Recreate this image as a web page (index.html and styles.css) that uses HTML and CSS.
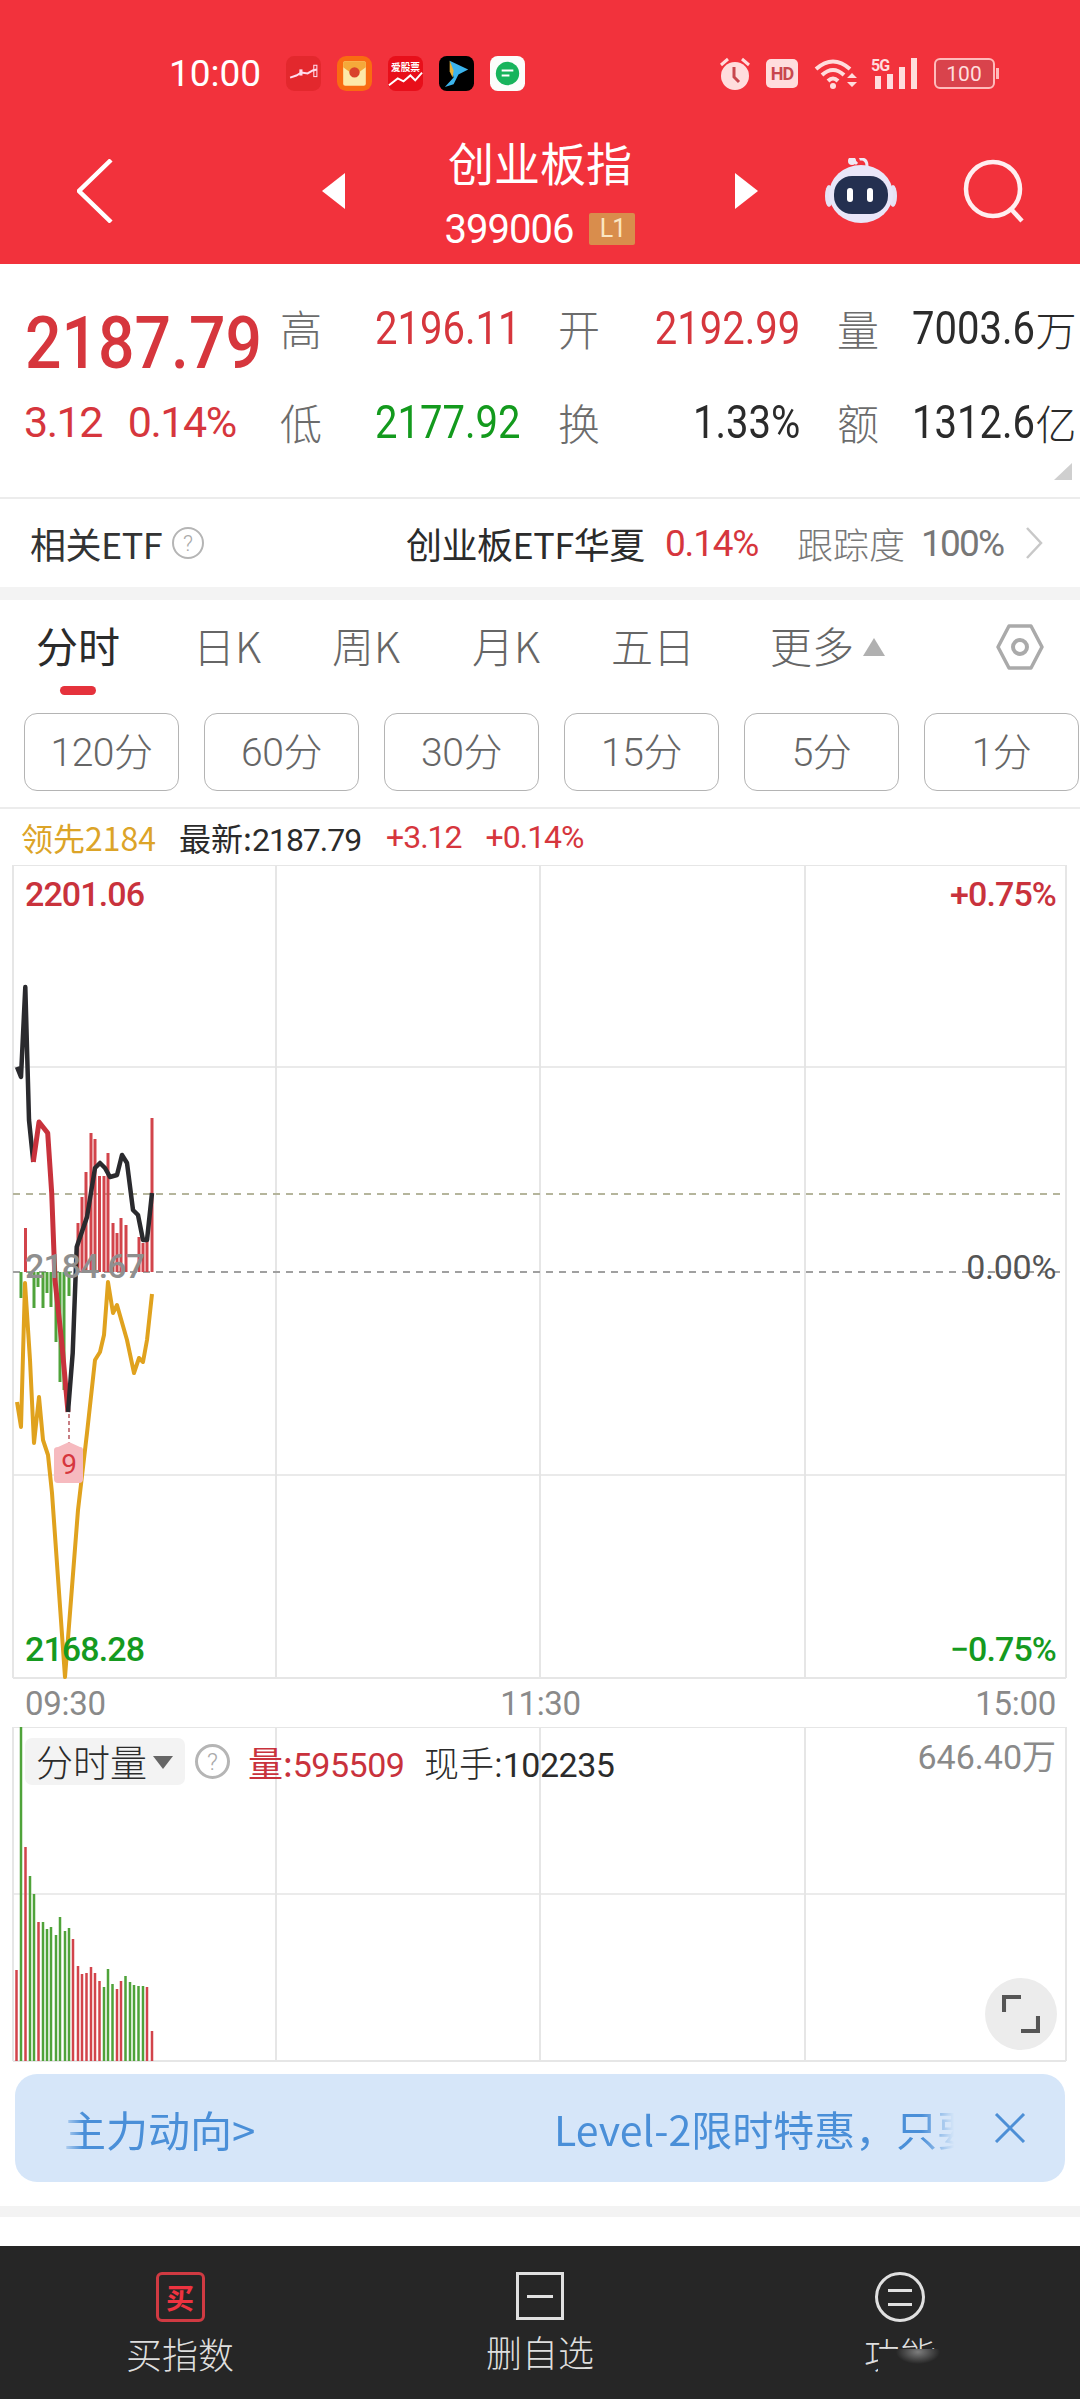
FILE: index.html
```html
<!DOCTYPE html>
<html lang="zh">
<head>
<meta charset="utf-8">
<title>创业板指</title>
<link rel="stylesheet" href="styles.css">
</head>
<body>
<div class="page">
<header class="head">
  <div class="status">
    <span class="clock">10:00</span>
    <div class="apps">
      <svg class="app" viewBox="0 0 34 34"><rect width="34" height="34" rx="8" fill="#e3282d"/><path d="M4 21l6-2 5-3 6 1 5-3 4-1" fill="none" stroke="#fde" stroke-width="2"/><rect x="13" y="13" width="3" height="6" fill="#fde"/><rect x="27" y="9" width="3" height="11" fill="none" stroke="#fde"/></svg>
      <svg class="app" viewBox="0 0 34 34"><rect width="34" height="34" rx="9" fill="#f96b12"/><rect x="6" y="5" width="22" height="24" rx="2" fill="#fde9a8"/><path d="M6 11l11 8 11-8V7q0-2-2-2H8q-2 0-2 2z" fill="#f5a93a"/><circle cx="17" cy="16" r="5" fill="#d9432b"/></svg>
      <svg class="app" viewBox="0 0 36 36"><rect width="36" height="36" rx="8" fill="#e80f1a"/><text class="app-text" x="18" y="15">爱股票</text><path d="M1 30l9-7 6 3 7-6 5 5 7-8" fill="none" stroke="#fff" stroke-width="2"/></svg>
      <svg class="app" viewBox="0 0 36 36"><rect width="36" height="36" rx="8" fill="#000"/><path d="M11 5l19 9-10 5-5 10-9 3 9-10z" fill="#3cb4ec"/><path d="M11 5l4 10-1 7-3-6z" fill="#e8b43a"/></svg>
      <svg class="app" viewBox="0 0 36 36"><rect width="36" height="36" rx="8" fill="#fbfdfb"/><circle cx="18" cy="18" r="12" fill="#17b45c"/><path d="M12 15h12M12 20h8" stroke="#fff" stroke-width="2"/></svg>
    </div>
    <div class="sys">
      <svg class="sys-alarm" viewBox="0 0 32 34"><path d="M2 9l7-6M30 9l-7-6" stroke="#fdd" stroke-width="3"/><circle cx="16" cy="20" r="14" fill="#fdd"/><path d="M15 11v10l5 5" fill="none" stroke="#c8474e" stroke-width="3"/></svg>
      <svg class="sys-hd" viewBox="0 0 32 29"><rect width="32" height="29" rx="5" fill="#fdd"/><text class="hd-text" x="16" y="21">HD</text></svg>
      <svg class="sys-wifi" viewBox="0 0 44 32"><path d="M2 12q17-15 34 0M8 18q11-10 22 0M14 24q5-5 10 0" fill="none" stroke="#fdd" stroke-width="4"/><circle cx="19" cy="29" r="3" fill="#fdd"/><path d="M33 21l5-5 5 5zM33 25l5 5 5-5z" fill="#fdd"/></svg>
      <svg class="sys-sig" viewBox="0 0 48 32"><text class="g-text" x="0" y="14">5G</text><rect x="4" y="19" width="6" height="13" fill="#fdd"/><rect x="16" y="17" width="6" height="15" fill="#fdd"/><rect x="28" y="10" width="6" height="22" fill="#fdd"/><rect x="40" y="1" width="6" height="31" fill="#fdd"/></svg>
      <svg class="sys-bat" viewBox="0 0 66 31"><rect x="1" y="1" width="59" height="29" rx="5" fill="#d9434c" stroke="#fbb" stroke-width="2"/><rect x="62" y="10" width="3" height="11" fill="#fbb"/><text class="bat-text" x="30" y="23">100</text></svg>
    </div>
  </div>
  <div class="titlebar">
    <svg class="back" viewBox="0 0 36 64"><path d="M34 1L2 32l32 31" fill="none" stroke="#fff" stroke-width="4.5"/></svg>
    <span class="tri-l"></span>
    <div class="title">
      <div class="title-name">创业板指</div>
      <div class="title-code"><span class="code">399006</span><span class="l1">L1</span></div>
    </div>
    <span class="tri-r"></span>
    <svg class="robot" viewBox="0 0 72 66"><path d="M32 6q-6-6-3-8 6-1 7 3 6 0 6 7" fill="none" stroke="#efe9f5" stroke-width="3"/><circle cx="27" cy="3" r="4" fill="#efe9f5"/><ellipse cx="4" cy="38" rx="4" ry="11" fill="#e6e2f4"/><ellipse cx="68" cy="38" rx="4" ry="11" fill="#e6e2f4"/><ellipse cx="36" cy="36" rx="32" ry="29" fill="#e9e6f8"/><rect x="9" y="18" width="54" height="38" rx="18" fill="#243050"/><rect x="22" y="30" width="6" height="14" rx="3" fill="#fff"/><rect x="42" y="30" width="6" height="14" rx="3" fill="#fff"/></svg>
    <svg class="search" viewBox="0 0 62 64"><circle cx="30" cy="30" r="27" fill="none" stroke="#ffeef0" stroke-width="4.5"/><path d="M48 50l11 12" stroke="#ffeef0" stroke-width="4.5"/></svg>
  </div>
</header>

<section class="quote">
  <div class="price">2187.79</div>
  <div class="sub"><span class="up s1">3.12</span><span class="up">0.14%</span></div>
  <span class="lb r1">高</span><span class="val up r1">2196.11</span>
  <span class="lb r1">开</span><span class="val up end r1">2192.99</span>
  <span class="lb r1">量</span><span class="valu dark r1"><span class="sx">7003.6</span><i class="unit">万</i></span>
  <span class="lb r2">低</span><span class="val down r2">2177.92</span>
  <span class="lb r2">换</span><span class="val dark end r2">1.33%</span>
  <span class="lb r2">额</span><span class="valu dark r2"><span class="sx">1312.6</span><i class="unit">亿</i></span>
  <span class="corner"></span>
</section>

<section class="etf">
  <span class="etf-t">相关ETF</span>
  <span class="q q-etf">?</span>
  <span class="etf-name">创业板ETF华夏</span>
  <span class="etf-pct">0.14%</span>
  <span class="etf-track">跟踪度</span>
  <span class="etf-num">100%</span>
  <svg class="etf-chev" viewBox="0 0 18 32"><path d="M2 1l14 15L2 31" fill="none" stroke="#c8c8c8" stroke-width="2.5"/></svg>
</section>
<div class="band"></div>

<nav class="tabs">
  <div class="tab on">分时<i class="bar"></i></div>
  <div class="tab t2">日K</div>
  <div class="tab t3">周K</div>
  <div class="tab t4">月K</div>
  <div class="tab t5">五日</div>
  <div class="tab t6">更多<i class="up-tri"></i></div>
  <svg class="hex" viewBox="0 0 48 46"><path d="M13 2h22l11 21-11 21H13L2 23z" fill="none" stroke="#aaa" stroke-width="3.5" stroke-linejoin="round"/><circle cx="24" cy="23" r="7" fill="none" stroke="#aaa" stroke-width="4"/></svg>
</nav>

<div class="periods">
  <span class="pd">120分</span><span class="pd">60分</span><span class="pd">30分</span><span class="pd">15分</span><span class="pd">5分</span><span class="pd">1分</span>
</div>

<div class="infoline">
  <span class="gold">领先2184</span><span class="dark">最新:<b class="n2">2187.79</b></span><span class="up n2">+3.12</span><span class="up n2">+0.14%</span>
</div>

<section class="chart">
  <svg class="chart-svg" viewBox="0 865 1080 815">
    <g class="grid">
      <path d="M13 865V1678M276 865V1678M540 865V1678M805 865V1678M1066 865V1678M13 865H1066M13 1678H1066"/>
    </g>
    <path class="grid-h" d="M13 1067H1066M13 1475H1066"/>
    <path class="dash-o" d="M13 1194H1066"/>
    <path class="dash-g" d="M13 1272H1066"/>
    <path class="bar-r" d="M25.5 1272V1228M78 1272V1223M82 1272V1197M86 1272V1172M91 1272V1133M95 1272V1139M99.500 1272V1176M104 1272V1176M108 1272V1153M113 1272V1223M117 1272V1233M121 1272V1218M126 1272V1225M139 1272V1237M143 1272V1243M147 1272V1237M152 1272V1118"/>
    <path class="bar-g" d="M21 1272V1298M30 1272V1278M34 1272V1308M38 1272V1287M43 1272V1308M47 1272V1293M51 1272V1307M56 1272V1342M60 1272V1382M64 1272V1390M69 1272V1296"/>
    <polyline class="ln-y" points="17,1402 21,1427 25,1283 30,1360 34,1443 39,1397 43,1440 48,1455 52,1493 65,1677 72,1587 78,1510 87,1433 95,1360 100,1352 104,1335 108,1282 113,1313 117,1305 127,1340 134,1373 139,1358 143,1362 147,1340 152,1294"/>
    <polyline class="ln-k" points="17,1067 21,1077 25.300,987 29,1120 33.300,1162"/>
    <polyline class="ln-r" points="33.300,1162 39,1122 47.700,1133 51.700,1193 55,1280 62,1345 68,1412"/>
    <polyline class="ln-k" points="68,1412 72.700,1353 76.700,1247 87,1217 95,1168 100,1163 105,1168 110,1177 117,1175 122,1155 127,1163 133,1210 138,1215 143,1240 147,1240 152,1193"/>
    <path class="sig-line" d="M69 1414V1443"/>
    <path class="sig" d="M54 1450q0-3 4-3l11-5 11 5q3 0 3 3v29q0 4-4 4H58q-4 0-4-4z"/>
    <text class="sig-t" x="69" y="1474">9</text>
  </svg>
  <span class="cl c-hi up2">2201.06</span>
  <span class="cl c-hip up2">+0.75%</span>
  <span class="cl c-pre">2184.67</span>
  <span class="cl c-zero">0.00%</span>
  <span class="cl c-lo down2">2168.28</span>
  <span class="cl c-lop down2">−0.75%</span>
</section>

<div class="times"><span>09:30</span><span>11:30</span><span>15:00</span></div>

<section class="vol">
  <svg class="vol-svg" viewBox="0 1728 1080 336">
    <path class="grid" d="M13 1728V2062M276 1728V2062M540 1728V2062M805 1728V2062M1066 1728V2062M13 1728H1066M13 2062H1066"/>
    <path class="grid-h" d="M13 1895H1066"/>
    <path class="v-r" d="M16.500 2062V1971M25.500 2062V1848M38.500 2062V1923M73 2062V1940M78 2062V1967M82 2062V1975M86.500 2062V1974M91 2062V1968M95 2062V1974M99.500 2062V1982M117 2062V1990M121 2062V1982M147 2062V1988M152 2062V2032"/>
    <path class="v-g" d="M21 2062V1728M30 2062V1877M34 2062V1895M43 2062V1923M47 2062V1930M51 2062V1928M56 2062V1936M60 2062V1918M65 2062V1932M69 2062V1929M104 2062V1988M108 2062V1970M112.500 2062V1985M125.500 2062V1977M130 2062V1983M134 2062V1986M138.500 2062V1987M143 2062V1987"/>
  </svg>
  <div class="vol-head">
    <span class="chip">分时量<i class="chip-tri"></i></span>
    <span class="q q-vol">?</span>
    <span class="vol-l up2">量:<b class="vn">595509</b></span>
    <span class="vol-c">现手:<b class="vn">102235</b></span>
  </div>
  <span class="vol-max">646.40万</span>
  <button class="expand"><svg viewBox="0 0 40 40" class="expand-i"><path d="M2 18V2h18M38 22v16H20" fill="none" stroke="#555" stroke-width="4.5"/></svg></button>
</section>

<div class="banner-wrap">
  <div class="banner">
    <div class="bn-l"><span>主力动向&gt;</span></div>
    <div class="bn-r"><span>Level-2限时特惠，只要</span></div>
    <svg class="bn-x" viewBox="0 0 32 30"><path d="M2 1l28 28M30 1L2 29" stroke="#4d8fd6" stroke-width="3" fill="none"/></svg>
  </div>
</div>
<div class="band2"></div>
<div class="gap"></div>

<footer class="bottom">
  <div class="bt">
    <span class="buy"><b>买</b></span>
    <span class="bt-t">买指数</span>
  </div>
  <div class="bt">
    <span class="del"><i></i></span>
    <span class="bt-t">删自选</span>
  </div>
  <div class="bt">
    <span class="fn"><i></i><i></i></span>
    <span class="bt-t">功能</span>
  </div>
  <div class="smudge"></div>
</footer>
</div>
</body>
</html>
```
FILE: styles.css
```css
* { box-sizing: border-box; }
html, body { margin: 0; padding: 0; background: #fff; }
body { font-family: "Noto Sans CJK SC", Roboto, sans-serif; color: #2b2b2b; }
i { font-style: normal; }
b { font-weight: inherit; }
.page { width: 1080px; height: 2400px; overflow: hidden; position: relative; }

.n2 { font-family: Roboto, "Noto Sans CJK SC", sans-serif; letter-spacing: -1px; }
.up { color: #d6363d; }
.down { color: #139a1d; }
.dark { color: #2b2b2b; }
.up2 { color: #c9323c; }
.down2 { color: #159a1f; }
.gold { color: #dca428; }

/* header */
.head { height: 264px; background: #f2323c; color: #fff; }
.status { height: 146px; display: flex; align-items: center; padding-left: 169px; }
.clock { font: 37px/1 Roboto, sans-serif; color: #fff; width: 117px; }
.apps { display: flex; gap: 16px; align-items: center; }
.app { width: 35px; height: 35px; display: block; }
.app-text { font: 700 10px "Noto Sans CJK SC", sans-serif; fill: #fff; text-anchor: middle; }
.sys { display: flex; align-items: center; margin-left: 194px; }
.sys svg { display: block; }
.sys-alarm { width: 32px; height: 34px; }
.sys-hd { width: 32px; height: 29px; margin-left: 15px; }
.sys-wifi { width: 44px; height: 32px; margin-left: 16px; }
.sys-sig { width: 48px; height: 32px; margin-left: 13px; }
.sys-bat { width: 66px; height: 31px; margin-left: 15px; }
.hd-text { font: 700 18px Roboto, sans-serif; fill: #c8474e; text-anchor: middle; letter-spacing: -1px; }
.g-text { font: 700 16px Roboto, sans-serif; fill: #fdd; letter-spacing: -1px; }
.bat-text { font: 400 21px Roboto, sans-serif; fill: #fdd; text-anchor: middle; }

.titlebar { height: 118px; padding: 0 0 28px 77px; display: flex; align-items: center; }
.back { width: 36px; height: 64px; display: block; }
.tri-l { margin-left: 209px; width: 0; height: 0; border-style: solid; border-width: 18px 23px 18px 0; border-color: transparent #fff transparent transparent; }
.tri-r { width: 0; height: 0; border-style: solid; border-width: 18px 0 18px 23px; border-color: transparent transparent transparent #fff; }
.title { width: 390px; text-align: center; margin-top: 14px; }
.title-name { font-size: 46px; line-height: 56px; margin-top: -12px; }
.title-code { display: flex; justify-content: center; align-items: center; height: 44px; margin-top: 18px; }
.code { font: 40px Roboto, sans-serif; letter-spacing: -1px; }
.l1 { width: 46px; height: 32px; margin-left: 16px; background: #d98d4c; color: #fbe6c4; font: 25px/32px Roboto, sans-serif; border-radius: 2px; letter-spacing: -1px; }
.robot { width: 72px; height: 66px; margin-left: 67px; display: block; }
.search { width: 62px; height: 64px; margin-left: 66px; display: block; }

/* quote */
.quote { height: 233px; padding: 17px 0 0 25px; display: grid; grid-template-columns: 256px 94px 184px 95px 184px 74px 168px; grid-template-rows: 94px 94px; position: relative; align-items: center; }
.price { grid-column: 1; grid-row: 1; align-self: end; justify-self: start; font: 500 73px/70px Roboto, sans-serif; color: #d6363d; transform: scaleX(.88); transform-origin: left center; margin-bottom: -3px; white-space: nowrap; }
.sub { grid-column: 1; grid-row: 2; font: 43px/60px Roboto, sans-serif; letter-spacing: -1.500px; white-space: nowrap; margin-left: -1px; }
.s1 { margin-right: 26px; }
.lb { font-size: 42px; line-height: 60px; color: #6c6c6c; font-weight: 300; margin-left: -1px; }
.val { font: 46px/60px Roboto, sans-serif; white-space: nowrap; justify-self: start; transform: scaleX(.87); transform-origin: left center; }
.val.end { justify-self: end; margin-right: 38px; transform-origin: right center; }
.valu { display: flex; align-items: center; white-space: nowrap; font: 46px/60px Roboto, sans-serif; }
.sx { display: inline-block; transform: scaleX(.87); transform-origin: left center; margin-right: -18px; }
.r1 { grid-row: 1; }
.r2 { grid-row: 2; }
.unit { font: 300 41px/60px "Noto Sans CJK SC", sans-serif; }
.corner { position: absolute; right: 8px; bottom: 17px; width: 0; height: 0; border-style: solid; border-width: 0 0 17px 18px; border-color: transparent transparent #cfcfcf transparent; }

/* etf */
.etf { height: 90px; border-top: 2px solid #ececec; display: flex; align-items: center; padding-left: 30px; white-space: nowrap; }
.etf-t { font-size: 36px; width: 142px; color: #333; letter-spacing: -0.500px; }
.q { display: inline-flex; align-items: center; justify-content: center; border-radius: 50%; border: 2px solid #b5b5b5; color: #aaa; font-weight: 300; font-family: Roboto, sans-serif; }
.q-etf { width: 32px; height: 32px; font-size: 22px; }
.etf-name { font-size: 36px; margin-left: 202px; width: 259px; letter-spacing: -0.500px; color: #2b2b2b; }
.etf-pct { font: 37px Roboto, sans-serif; letter-spacing: -1.200px; color: #d6363d; width: 132px; }
.etf-track { font-size: 36px; color: #777; font-weight: 300; width: 124px; }
.etf-num { font: 37px Roboto, sans-serif; letter-spacing: -1.800px; color: #777; width: 104px; }
.etf-chev { width: 18px; height: 32px; display: block; }
.band { height: 13px; background: #f3f3f3; }

/* tabs */
.tabs { height: 113px; position: relative; display: block; }
.tab { position: absolute; top: 22px; font-size: 42px; line-height: 46px; color: #666; font-weight: 300; white-space: nowrap; }
.tab.on { left: 36px; color: #2b2b2b; font-weight: 400; }
.t2 { left: 193px; }
.t3 { left: 332px; }
.t4 { left: 472px; }
.t5 { left: 611px; }
.t6 { left: 770px; }
.bar { position: absolute; left: 24px; top: 64px; width: 36px; height: 9px; background: #e5323c; border-radius: 5px; }
.up-tri { position: absolute; left: 93px; top: 16px; width: 0; height: 0; border-style: solid; border-width: 0 11px 18px; border-color: transparent transparent #b0b0b0; }
.hex { position: absolute; left: 996px; top: 24px; width: 48px; height: 46px; }

.periods { height: 96px; display: flex; gap: 25px; padding-left: 24px; border-bottom: 2px solid #ececec; align-items: flex-start; }
.pd { flex: 0 0 155px; height: 78px; border: 1.500px solid #b4b4b4; border-radius: 13px; font: 300 39px/78px Roboto, "Noto Sans CJK SC", sans-serif; color: #666; text-align: center; letter-spacing: -0.500px; }

.infoline { height: 56px; display: flex; align-items: center; padding-left: 21px; font-size: 32px; white-space: nowrap; }
.infoline .gold { width: 158px; }
.infoline .dark { width: 207px; }
.infoline .up { margin-right: 24px; }

/* chart */
.chart { position: relative; height: 815px; }
.chart-svg { width: 1080px; height: 815px; display: block; }
.grid { stroke: #e6e6e6; stroke-width: 2; fill: none; }
.grid-h { stroke: #e4e4e4; stroke-width: 1.500; fill: none; }
.dash-o { stroke: #b5b59c; stroke-width: 2; stroke-dasharray: 7 6; fill: none; }
.dash-g { stroke: #a0a0a0; stroke-width: 2; stroke-dasharray: 7 6; fill: none; }
.bar-r { stroke: #d2444b; stroke-width: 3; fill: none; }
.bar-g { stroke: #4fa33a; stroke-width: 3; fill: none; }
.ln-y { stroke: #e0a21e; stroke-width: 4; fill: none; stroke-linejoin: round; }
.ln-k { stroke: #2a2a2e; stroke-width: 4.500; fill: none; stroke-linejoin: round; }
.ln-r { stroke: #c8323c; stroke-width: 5; fill: none; stroke-linejoin: round; }
.sig-line { stroke: #b5565c; stroke-width: 1.500; stroke-dasharray: 4 3; fill: none; }
.sig { fill: #f6babf; }
.sig-t { font: 28px Roboto, sans-serif; fill: #d6363d; text-anchor: middle; }
.cl { position: absolute; font: 500 34px/40px Roboto, sans-serif; letter-spacing: -0.900px; }
.c-hi { left: 25px; top: 9px; }
.c-hip { right: 24px; top: 9px; }
.c-pre { left: 25px; top: 381px; color: #8f8f8f; }
.c-zero { right: 24px; top: 382px; color: #555; font-weight: 400; letter-spacing: -0.300px; }
.c-lo { left: 25px; top: 764px; }
.c-lop { right: 24px; top: 764px; }
.times { height: 47px; display: flex; justify-content: space-between; padding: 4px 24px 0 25px; font: 33px/40px Roboto, sans-serif; color: #8a8a8a; letter-spacing: -0.300px; }

/* volume */
.vol { position: relative; height: 336px; }
.vol-svg { width: 1080px; height: 336px; display: block; }
.v-r { stroke: #d2444b; stroke-width: 2.500; fill: none; }
.v-g { stroke: #4fa33a; stroke-width: 2.500; fill: none; }
.vol-head { position: absolute; left: 25px; top: 11px; display: flex; align-items: center; height: 47px; white-space: nowrap; }
.chip { width: 160px; height: 47px; background: #f3f3f3; border-radius: 7px; font-size: 37px; line-height: 47px; padding-left: 11px; position: relative; font-weight: 300; }
.chip-tri { position: absolute; left: 128px; top: 18px; width: 0; height: 0; border-style: solid; border-width: 13px 10px 0; border-color: #666 transparent transparent; }
.q-vol { width: 35px; height: 35px; font-size: 24px; margin-left: 10px; border-width: 3px; }
.vol-l { font-size: 35px; margin-left: 18px; width: 176px; }
.vol-c { font-size: 35px; color: #2b2b2b; font-weight: 300; }
.vn { font-family: Roboto, sans-serif; font-size: 34px; letter-spacing: -0.500px; font-weight: 400; }
.vol-max { position: absolute; right: 24px; top: 10px; font: 34px/40px Roboto, "Noto Sans CJK SC", sans-serif; color: #8a8a8a; }
.expand { position: absolute; left: 985px; top: 251px; width: 72px; height: 72px; border-radius: 50%; background: #ececec; border: 0; padding: 0; display: flex; align-items: center; justify-content: center; }
.expand-i { width: 38px; height: 38px; display: block; }

/* banner */
.banner-wrap { padding: 11px 15px 0; height: 143px; }
.banner { height: 108px; background: #d6e6f9; border-radius: 22px; display: flex; align-items: center; color: #4a8fd8; position: relative; }
.bn-l { margin-left: 44px; width: 203px; overflow: hidden; white-space: nowrap; font-size: 42px; -webkit-mask-image: linear-gradient(90deg, transparent 0, #000 24px); mask-image: linear-gradient(90deg, transparent 0, #000 24px); padding-left: 5px; }
.bn-r { margin-left: 292px; width: 400px; overflow: hidden; white-space: nowrap; font-size: 41px; -webkit-mask-image: linear-gradient(270deg, transparent 0, #000 32px); mask-image: linear-gradient(270deg, transparent 0, #000 32px); }
.bn-x { width: 32px; height: 30px; margin-left: 40px; display: block; }
.band2 { height: 11px; background: #f3f3f3; }
.gap { height: 29px; }

/* bottom */
.bottom { height: 153px; background: #262626; display: grid; grid-template-columns: repeat(3, 360px); position: relative; }
.bt { display: flex; flex-direction: column; align-items: center; padding-top: 26px; }
.bt-t { font-size: 36px; line-height: 46px; color: #dedede; margin-top: 8px; font-weight: 300; }
.buy { width: 49px; height: 50px; border: 3px solid #d03a42; border-radius: 6px; display: flex; align-items: center; justify-content: center; color: #ee3340; font-size: 28px; font-weight: 700; }
.del { width: 48px; height: 48px; border: 3px solid #e0e0e0; display: flex; align-items: center; justify-content: center; }
.del i { width: 26px; height: 3px; background: #e0e0e0; display: block; }
.fn { width: 50px; height: 50px; border: 3px solid #e0e0e0; border-radius: 50%; display: flex; flex-direction: column; gap: 11px; align-items: center; justify-content: center; }
.fn i { width: 24px; height: 3px; background: #e0e0e0; display: block; }
.smudge { position: absolute; left: 878px; top: 103px; width: 202px; height: 50px; background: radial-gradient(ellipse 22px 12px at 40px 3px, rgba(255,255,255,.4), transparent), #262626; }
```
